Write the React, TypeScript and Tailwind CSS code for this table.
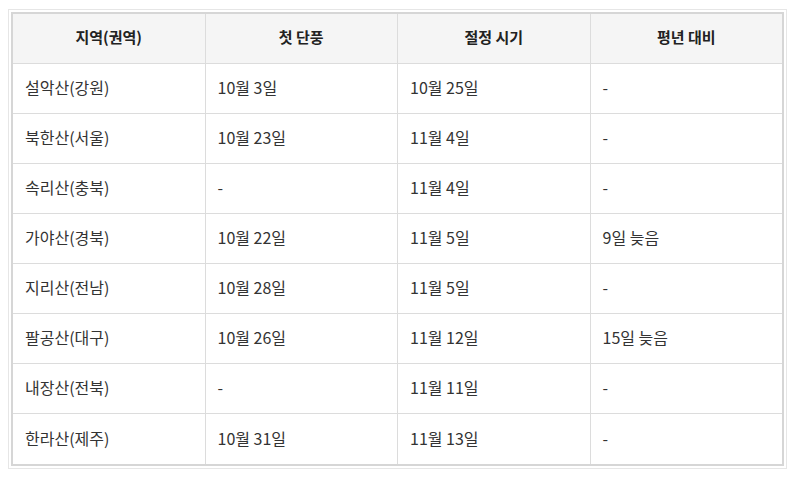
const headers = ["지역(권역)", "첫 단풍", "절정 시기", "평년 대비"];

const rows = [
  ["설악산(강원)", "10월 3일", "10월 25일", "-"],
  ["북한산(서울)", "10월 23일", "11월 4일", "-"],
  ["속리산(충북)", "-", "11월 4일", "-"],
  ["가야산(경북)", "10월 22일", "11월 5일", "9일 늦음"],
  ["지리산(전남)", "10월 28일", "11월 5일", "-"],
  ["팔공산(대구)", "10월 26일", "11월 12일", "15일 늦음"],
  ["내장산(전북)", "-", "11월 11일", "-"],
  ["한라산(제주)", "10월 31일", "11월 13일", "-"],
];

export default function App() {
  return (
    <div
      className="w-[800px] h-[483px] bg-white pt-[9px] pl-[8px] text-[16px] text-[#333]"
      style={{ fontFamily: '"Noto Sans CJK KR", "Noto Sans", sans-serif' }}
    >
      <div className="w-[779px] border border-[#e6e6e6] p-[2px]">
        <div className="border-2 border-[#d6d6d6]">
          <div className="flex h-[50px] bg-[#f5f5f5] border-b border-[#dcdcdc]">
            {headers.map((h, i) => (
              <div
                key={i}
                className={
                  "flex-1 flex items-center justify-center pb-[3px] font-bold text-[15px] text-[#222] " +
                  (i < 3 ? "border-r border-[#dcdcdc]" : "")
                }
              >
                {h}
              </div>
            ))}
          </div>
          {rows.map((row, r) => (
            <div
              key={r}
              className={
                "flex h-[50px] " +
                (r < rows.length - 1 ? "border-b border-[#dcdcdc]" : "")
              }
            >
              {row.map((cell, i) => (
                <div
                  key={i}
                  className={
                    "flex-1 flex items-center pl-[12px] pb-[3px] " +
                    (i < 3 ? "border-r border-[#dcdcdc]" : "")
                  }
                >
                  {cell}
                </div>
              ))}
            </div>
          ))}
        </div>
      </div>
    </div>
  );
}
